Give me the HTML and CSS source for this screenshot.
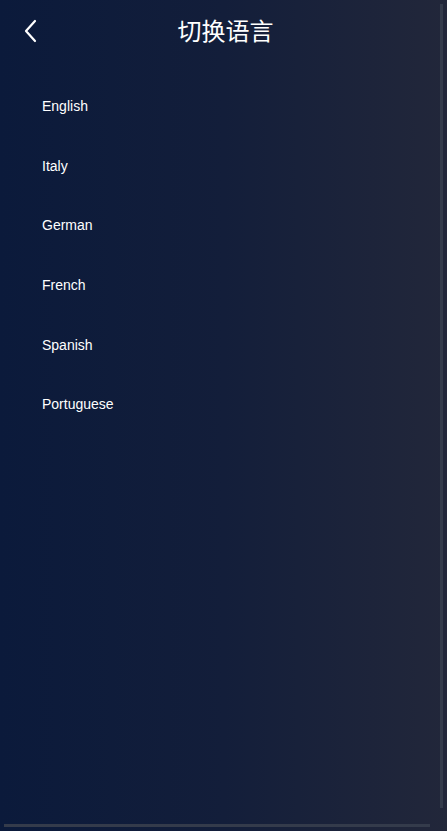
FILE: index.html
```html
<!DOCTYPE html>
<html lang="zh">
<head>
<meta charset="utf-8">
<link rel="stylesheet" href="styles.css">
</head>
<body>
<div class="page">
  <header class="header">
    <button class="back" aria-label="back">
      <svg width="16" height="24" viewBox="0 0 16 24"><path d="M13 2 L4 12 L13 22" fill="none" stroke="#fff" stroke-width="2.2" stroke-linecap="round" stroke-linejoin="round"/></svg>
    </button>
    <h1 class="title">切换语言</h1>
  </header>
  <ul class="list">
    <li class="item">English</li>
    <li class="item">Italy</li>
    <li class="item">German</li>
    <li class="item">French</li>
    <li class="item">Spanish</li>
    <li class="item">Portuguese</li>
  </ul>
  <div class="vscroll"></div>
  <div class="hscroll"></div>
</div>
</body>
</html>
```
FILE: styles.css
```css
html, body {
  margin: 0;
  padding: 0;
  height: 100%;
}
body {
  font-family: "Liberation Sans", Arial, "Noto Sans CJK SC", sans-serif;
  color: #fff;
}
.page {
  position: relative;
  height: 831px;
  overflow: hidden;
  background: linear-gradient(90deg, #0b1a3b 0%, #131e3a 50%, #22273a 100%);
}
.header {
  position: relative;
  height: 60px;
  display: flex;
  align-items: center;
  justify-content: center;
  padding-left: 4px;
}
.back {
  position: absolute;
  left: 22px;
  top: 19px;
  width: 16px;
  height: 24px;
  padding: 0;
  border: 0;
  background: none;
  display: flex;
  align-items: center;
  justify-content: center;
}
.title {
  margin: 0;
  font-family: "Noto Sans CJK SC", "Noto Sans", sans-serif;
  font-weight: 400;
  font-size: 24px;
  line-height: 1;
}
.list {
  list-style: none;
  margin: 0;
  padding: 16px 0 0 42px;
}
.item {
  height: 59.7px;
  display: flex;
  align-items: center;
  font-size: 14px;
}
.vscroll {
  position: absolute;
  left: 440px;
  top: 4px;
  width: 3px;
  height: 804px;
  background: #343b4b;
}
.hscroll {
  position: absolute;
  left: 4px;
  top: 824px;
  width: 426px;
  height: 3px;
  background: #343b4b;
}
```
